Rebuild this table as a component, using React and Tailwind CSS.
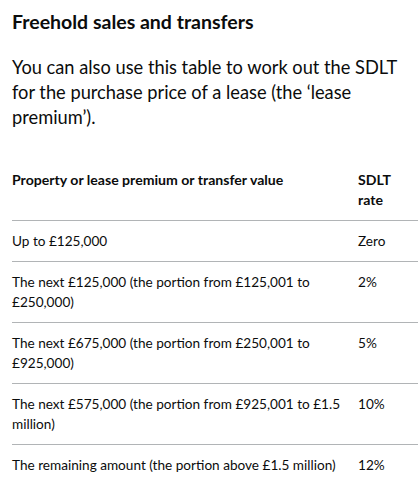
import React from 'react';

const rows = [
  ['Up to £125,000', 'Zero'],
  ['The next £125,000 (the portion from £125,001 to £250,000)', '2%'],
  ['The next £675,000 (the portion from £250,001 to £925,000)', '5%'],
  ['The next £575,000 (the portion from £925,001 to £1.5 million)', '10%'],
  ['The remaining amount (the portion above £1.5 million)', '12%'],
];

export default function App() {
  return (
    <div className="min-h-screen bg-white pl-[12px] pt-[9px] text-[#0b0c0c] font-['Lato',sans-serif]">
      <h2 className="text-[19.5px] font-bold leading-[25px]">Freehold sales and transfers</h2>

      <p className="mt-[21px] pr-[12px] text-[18.25px] leading-[25px]">
        You can also use this table to work out the SDLT for the purchase price of a lease (the ‘lease premium’).
      </p>

      <table className="mt-[30px] w-[406px] table-fixed border-collapse text-left">
        <colgroup>
          <col className="w-[346px]" />
          <col className="w-[60px]" />
        </colgroup>
        <thead>
          <tr className="border-b border-[#b1b4b6]">
            <th className="py-[10px] pr-[12px] align-top text-[14.1px] font-bold leading-[20px]">
              Property or lease premium or transfer value
            </th>
            <th className="py-[10px] pr-[20px] align-top text-[14.1px] font-bold leading-[20px]">SDLT rate</th>
          </tr>
        </thead>
        <tbody>
          {rows.map(([band, rate]) => (
            <tr key={band} className="border-b border-[#b1b4b6] last:border-b-0">
              <td className="py-[10px] pr-[12px] align-top text-[13.6px] leading-[20px]">{band}</td>
              <td className="py-[10px] pr-[20px] align-top text-[13.6px] leading-[20px]">{rate}</td>
            </tr>
          ))}
        </tbody>
      </table>
    </div>
  );
}
